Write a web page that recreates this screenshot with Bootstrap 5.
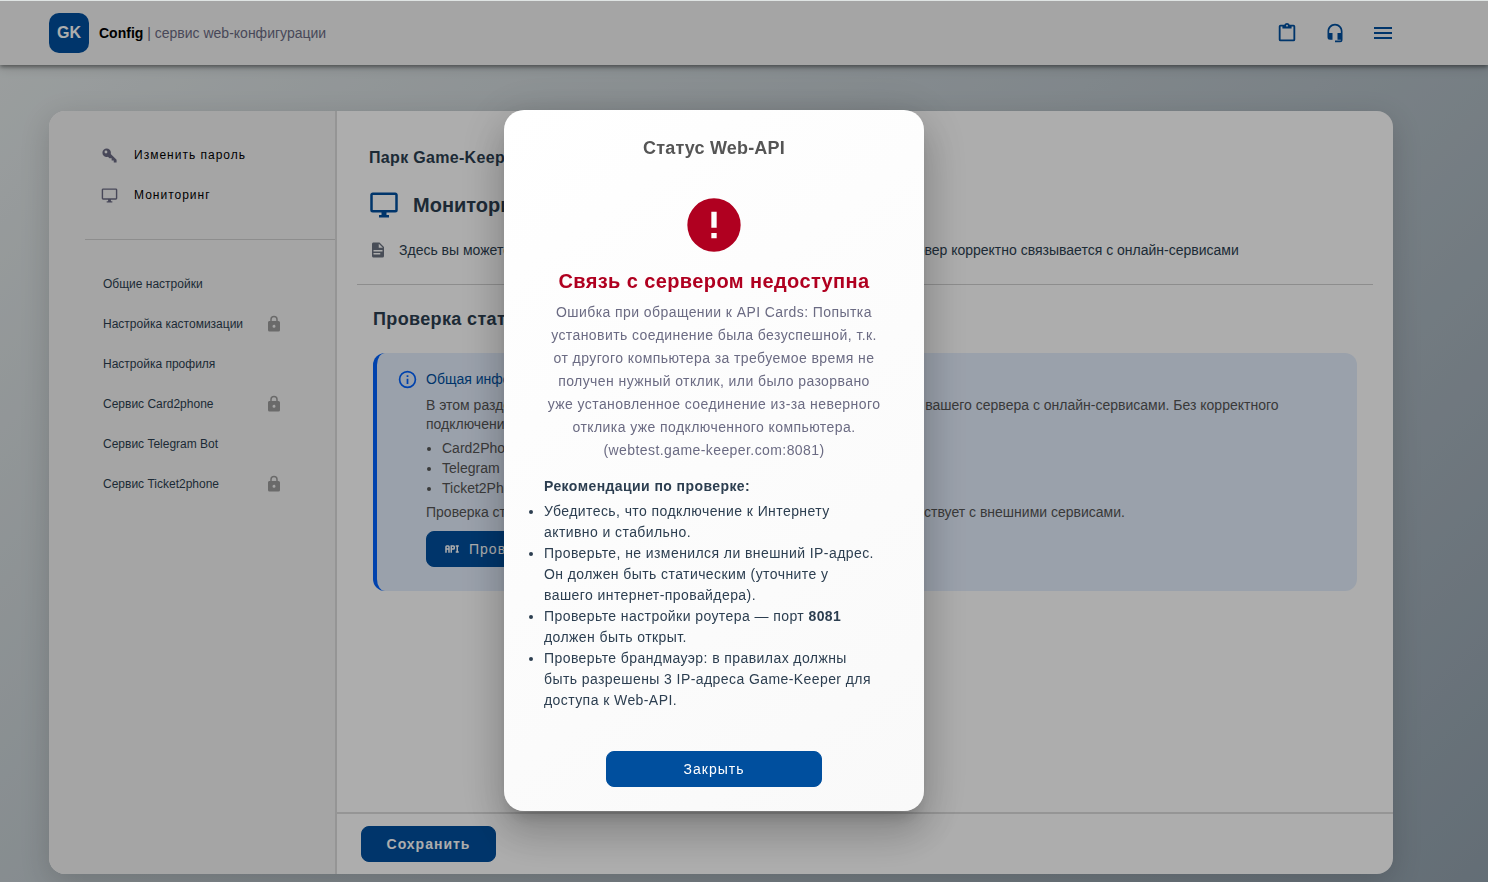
<!DOCTYPE html>
<html lang="ru">
<head>
<meta charset="utf-8">
<meta name="viewport" content="width=device-width, initial-scale=1">
<title>GK Config</title>
<link href="https://cdn.jsdelivr.net/npm/bootstrap@5.3.0/dist/css/bootstrap.min.css" rel="stylesheet">
<style>
:root { --brand: #004f9e; --ink: #2c3e50; --muted: #6b6b83; --line: #dcdcdc; }
body { font-family: "Liberation Sans", Arial, sans-serif; font-size: 14px; line-height: 20px; color: var(--ink);
  min-height: 100vh; border-top: 1px solid #dfe4e3; background: linear-gradient(135deg, #e6ebeb, #93a2ae); }
svg { fill: currentColor; flex-shrink: 0; display: block; }
.topbar { height: 64px; padding: 0 93px 0 49px; background: #f3f3f3; box-shadow: 0 2px 4px rgba(0,0,0,.4), 0 4px 10px rgba(0,0,0,.12); }
.logo { width: 40px; height: 40px; border-radius: 10px; background: var(--brand); font-size: 16px; }
.brand-row { gap: 10px; }
.muted { color: var(--muted); }
.brand-ink { color: var(--brand); }
.icon-btn { width: 24px; height: 24px; color: var(--brand); }
.page { padding: 46px 95px 8px 49px; }
.panel { border-radius: 16px; background: #fff; box-shadow: 0 8px 30px rgba(0,0,0,.16); }
.side { width: 288px; background: #f4f4f4; border-right: 2px solid var(--line); }
.side a { height: 40px; }
.side-top { padding: 24px 0 24px 52px; font-size: 12px; letter-spacing: 1px; }
.side-top a { gap: 16px; color: #000; }
.side-list { padding: 24px 0 0 54px; font-size: 12px; }
.side-list a { color: var(--ink); padding-right: 52px; }
.rule { border: 0; border-top: 1px solid #d0d0d0; opacity: 1; margin: 0; }
.side .rule { margin-left: 36px; }
.lock { color: #9c9c9c; }
.doc { color: #6b7280; }
.accent { color: #0062ff; }
.content { padding: 35px 20px 0; }
.head-block { padding: 0 12px; }
.park, .sub { letter-spacing: .02em; }
.park { font-size: 16px; line-height: 24px; }
.ttl { font-size: 20px; line-height: 30px; gap: 14px; }
.sub { font-size: 18px; line-height: 28px; padding-left: 16px; }
.info { margin: 20px 16px 0; padding: 16px 60px 24px 20px; gap: 8px; border-left: 4px solid #0062ff; border-radius: 12px; background: #e4eefd; color: #555; }
.info ul { padding-left: 16px; margin: 4px 0; }
.info .para { line-height: 19px; }
.info-title { margin-bottom: 7px; }
.info-note { margin-bottom: 9px; }
.btn-brand { --bs-btn-color: #fff; --bs-btn-bg: var(--brand); --bs-btn-border-color: var(--brand); --bs-btn-hover-bg: #00438a; --bs-btn-hover-color: #fff;
  height: 36px; padding: 0 16px; border-radius: 8px; font-size: 14px; letter-spacing: 1px; }
.foot { border-top: 2px solid var(--line); padding: 12px 24px; }
.save { width: 135px; }
.modal-backdrop { --bs-backdrop-opacity: .32; top: 1px; }
.modal { padding-right: 60px; }
.modal-dialog { max-width: 420px; margin: 110px auto 24px; }
.modal-content { border: 0; border-radius: 20px; background: linear-gradient(145deg, #fff, #f9f9f9); color: var(--ink); letter-spacing: .03em;
  padding: 24px 40px; box-shadow: 0 11px 15px -7px rgba(0,0,0,.2), 0 24px 38px 3px rgba(0,0,0,.14), 0 9px 46px 8px rgba(0,0,0,.12); }
.modal-title { font-size: 18px; line-height: 28px; color: #555; letter-spacing: .01em; }
.err { color: #b00020; }
.err-icon { margin: 31px auto 8px; }
.err-title { font-size: 20px; line-height: 32px; letter-spacing: .02em; }
.err-text { line-height: 23px; margin: 4px 0 14px; padding: 0 2px; }
.tips-title { margin-bottom: 5px; }
.tips { line-height: 21px; padding: 0 6px 0 0; margin-bottom: 40px; }
.close-btn { width: 216px; }
</style>
</head>
<body class="d-flex flex-column">
<header class="topbar d-flex align-items-center justify-content-between">
  <div class="brand-row d-flex align-items-center">
    <span class="logo d-flex align-items-center justify-content-center text-white fw-bold">GK</span>
    <span class="muted"><strong class="text-black">Config</strong> | сервис web-конфигурации</span>
  </div>
  <nav class="d-flex gap-4">
    <button type="button" class="icon-btn btn p-0 border-0 d-flex align-items-center justify-content-center" aria-label="Журнал"><svg width="22" height="22" viewBox="0 0 24 24"><path d="M19,3H14.82C14.4,1.84 13.3,1 12,1C10.7,1 9.6,1.84 9.18,3H5A2,2 0 0,0 3,5V19A2,2 0 0,0 5,21H19A2,2 0 0,0 21,19V5A2,2 0 0,0 19,3M12,3A1,1 0 0,1 13,4A1,1 0 0,1 12,5A1,1 0 0,1 11,4A1,1 0 0,1 12,3M7,7H17V5H19V19H5V5H7V7Z"/></svg></button>
    <button type="button" class="icon-btn btn p-0 border-0 d-flex align-items-center justify-content-center" aria-label="Поддержка"><svg width="20" height="20" viewBox="0 0 24 24"><path d="M12,1C7,1 3,5 3,10V17A3,3 0 0,0 6,20H9V12H5V10A7,7 0 0,1 12,3A7,7 0 0,1 19,10V12H15V20H19V21H12V23H18A3,3 0 0,0 21,20V10C21,5 16.97,1 12,1Z"/></svg></button>
    <button type="button" class="icon-btn btn p-0 border-0" aria-label="Меню"><svg width="24" height="24" viewBox="0 0 24 24"><path d="M3,6H21V8H3V6M3,11H21V13H3V11M3,16H21V18H3V16Z"/></svg></button>
  </nav>
</header>

<main class="page flex-grow-1 d-flex">
  <div class="panel d-flex flex-grow-1 overflow-hidden">
    <aside class="side flex-shrink-0">
      <nav class="side-top">
        <a href="#" class="d-flex align-items-center text-decoration-none"><svg class="muted" width="17" height="17" viewBox="0 0 24 24"><path d="M22,18V22H18V19H15V16H12L9.74,13.74C9.19,13.91 8.61,14 8,14A6,6 0 0,1 2,8A6,6 0 0,1 8,2A6,6 0 0,1 14,8C14,8.61 13.91,9.19 13.74,9.74L22,18M7,5A2,2 0 0,0 5,7A2,2 0 0,0 7,9A2,2 0 0,0 9,7A2,2 0 0,0 7,5Z"/></svg>Изменить пароль</a>
        <a href="#" class="d-flex align-items-center text-decoration-none"><svg class="muted" width="17" height="17" viewBox="0 0 24 24"><path d="M21,16H3V4H21M21,2H3C1.89,2 1,2.89 1,4V16A2,2 0 0,0 3,18H10V20H8V22H16V20H14V18H21A2,2 0 0,0 23,16V4C23,2.89 22.1,2 21,2Z"/></svg>Мониторинг</a>
      </nav>
      <hr class="rule">
      <nav class="side-list">
        <a href="#" class="d-flex align-items-center justify-content-between text-decoration-none">Общие настройки</a>
        <a href="#" class="d-flex align-items-center justify-content-between text-decoration-none">Настройка кастомизации<svg class="lock" width="18" height="18" viewBox="0 0 24 24"><path id="lock" d="M12,17A2,2 0 0,0 14,15C14,13.89 13.1,13 12,13A2,2 0 0,0 10,15A2,2 0 0,0 12,17M18,8A2,2 0 0,1 20,10V20A2,2 0 0,1 18,22H6A2,2 0 0,1 4,20V10C4,8.89 4.9,8 6,8H7V6A5,5 0 0,1 12,1A5,5 0 0,1 17,6V8H18M12,3A3,3 0 0,0 9,6V8H15V6A3,3 0 0,0 12,3Z"/></svg></a>
        <a href="#" class="d-flex align-items-center justify-content-between text-decoration-none">Настройка профиля</a>
        <a href="#" class="d-flex align-items-center justify-content-between text-decoration-none">Сервис Card2phone<svg class="lock" width="18" height="18" viewBox="0 0 24 24"><use href="#lock"/></svg></a>
        <a href="#" class="d-flex align-items-center justify-content-between text-decoration-none">Сервис Telegram Bot</a>
        <a href="#" class="d-flex align-items-center justify-content-between text-decoration-none">Сервис Ticket2phone<svg class="lock" width="18" height="18" viewBox="0 0 24 24"><use href="#lock"/></svg></a>
      </nav>
    </aside>
    <section class="d-flex flex-column flex-grow-1">
      <div class="content flex-grow-1">
        <div class="head-block">
          <h1 class="park fw-bold mb-0">Парк Game-Keeper</h1>
          <h2 class="ttl fw-bold d-flex align-items-center mt-3 pt-1 mb-3"><svg class="brand-ink" width="30" height="30" viewBox="0 0 24 24"><path d="M21,16H3V4H21M21,2H3C1.89,2 1,2.89 1,4V16A2,2 0 0,0 3,18H10V20H8V22H16V20H14V18H21A2,2 0 0,0 23,16V4C23,2.89 22.1,2 21,2Z"/></svg>Мониторинг</h2>
          <p class="d-flex align-items-center gap-2 pt-1 mb-4"><svg class="doc me-1" width="18" height="18" viewBox="0 0 24 24"><path d="M13,9H18.5L13,3.5V9M6,2H14L20,8V20A2,2 0 0,1 18,22H6C4.89,22 4,21.1 4,20V4C4,2.89 4.89,2 6,2M15,18V16H6V18H15M18,14V12H6V14H18Z"/></svg><span>Здесь вы можете проверить статус подключения и убедиться в том, что ваш сервер корректно связывается с онлайн-сервисами</span></p>
        </div>
        <hr class="rule">
        <h3 class="sub fw-bold mb-0 mt-3 pt-1">Проверка статуса Web-API</h3>
        <div class="info d-flex align-items-start">
          <svg class="accent" width="21" height="21" viewBox="0 0 24 24"><path d="M11,9H13V7H11M12,20C7.59,20 4,16.41 4,12C4,7.59 7.59,4 12,4C16.41,4 20,7.59 20,12C20,16.41 16.41,20 12,20M12,2A10,10 0 0,0 2,12A10,10 0 0,0 12,22A10,10 0 0,0 22,12A10,10 0 0,0 12,2M11,17H13V11H11V17Z"/></svg>
          <div>
            <div class="info-title brand-ink">Общая информация</div>
            <div class="para">В этом разделе вы можете проверить текущий статус прямого подключения вашего сервера с онлайн-сервисами. Без корректного подключения невозможна работа сервисов:</div>
            <ul><li>Card2Phone</li><li>Telegram Bot</li><li>Ticket2Phone</li></ul>
            <div class="info-note">Проверка статуса поможет убедиться, что ваш сервер корректно взаимодействует с внешними сервисами.</div>
            <button type="button" class="btn btn-brand d-flex align-items-center gap-2"><svg width="18" height="18" viewBox="0 0 24 24"><path d="M7 7H5A2 2 0 0 0 3 9V17H5V13H7V17H9V9A2 2 0 0 0 7 7M7 11H5V9H7M14 7H10V17H12V13H14A2 2 0 0 0 16 11V9A2 2 0 0 0 14 7M14 11H12V9H14M20 9V15H21V17H17V15H18V9H17V7H21V9Z"/></svg>Проверить</button>
          </div>
        </div>
      </div>
      <div class="foot"><button type="button" class="btn btn-brand save fw-bold">Сохранить</button></div>
    </section>
  </div>
</main>

<div class="modal-backdrop show"></div>
<div class="modal d-block" tabindex="-1" role="dialog" aria-modal="true" aria-labelledby="dlgTitle">
  <div class="modal-dialog">
    <div class="modal-content">
      <h4 class="modal-title fw-bold text-center" id="dlgTitle">Статус Web-API</h4>
      <svg class="err err-icon" width="64" height="64" viewBox="0 0 24 24"><path d="M13,13H11V7H13M13,17H11V15H13M12,2A10,10 0 0,0 2,12A10,10 0 0,0 12,22A10,10 0 0,0 22,12A10,10 0 0,0 12,2Z"/></svg>
      <div class="err err-title fw-bold text-center">Связь с сервером недоступна</div>
      <p class="err-text muted text-center">Ошибка при обращении к API Cards: Попытка установить соединение была безуспешной, т.к. от другого компьютера за требуемое время не получен нужный отклик, или было разорвано уже установленное соединение из-за неверного отклика уже подключенного компьютера. (webtest.game-keeper.com:8081)</p>
      <div class="tips-title fw-bold">Рекомендации по проверке:</div>
      <ul class="tips">
        <li>Убедитесь, что подключение к Интернету активно и стабильно.</li>
        <li>Проверьте, не изменился ли внешний IP-адрес. Он должен быть статическим (уточните у вашего интернет-провайдера).</li>
        <li>Проверьте настройки роутера — порт <b>8081</b> должен быть открыт.</li>
        <li>Проверьте брандмауэр: в правилах должны быть разрешены 3 IP-адреса Game-Keeper для доступа к Web-API.</li>
      </ul>
      <button type="button" class="btn btn-brand close-btn mx-auto">Закрыть</button>
    </div>
  </div>
</div>
<script src="https://cdn.jsdelivr.net/npm/bootstrap@5.3.0/dist/js/bootstrap.bundle.min.js"></script>
</body>
</html>
